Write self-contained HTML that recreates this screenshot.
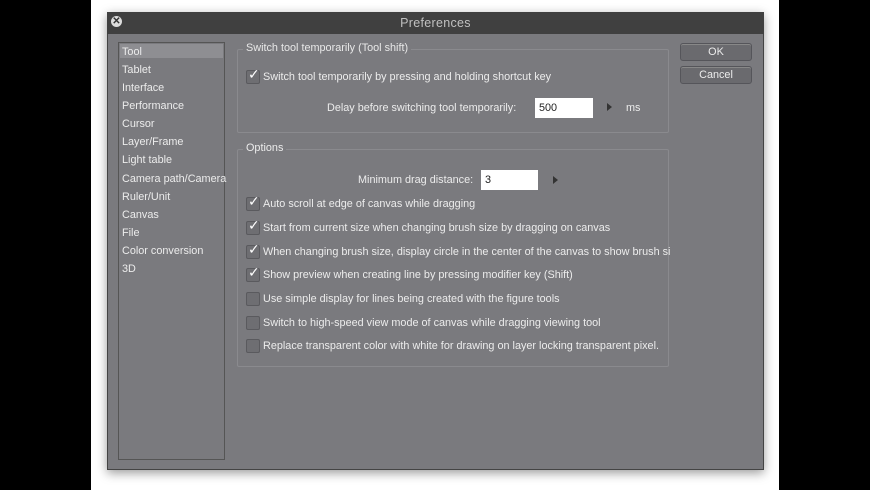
<!DOCTYPE html>
<html><head><style>
body{margin:0;width:870px;height:490px;background:#fff;position:relative;overflow:hidden;font-family:"Liberation Sans",sans-serif;font-size:10.85px;color:#ececec}
.a{position:absolute}
.cb{position:absolute;left:246px;width:12px;height:12px;background:#6e6e72;border:1px solid #5a5a5e;border-radius:2px}
.ck::after{content:"✓";position:absolute;left:1px;top:-4px;font-size:14px;color:#fff;font-family:"DejaVu Sans",sans-serif}
.lbl{position:absolute;left:263px;white-space:nowrap;margin-top:1px}
.li{position:absolute;left:122px;white-space:nowrap}
.grp{position:absolute;border:1px solid #8a8a8e;border-radius:2px}
.btn{position:absolute;left:680px;width:70px;height:16px;background:#6a6a6e;border:1px solid #55555a;border-radius:3px;text-align:center;line-height:16px;box-shadow:inset 0 1px 0 #888}
</style></head><body>
<div class="a" style="left:0;top:0;width:91px;height:490px;background:#000"></div>
<div class="a" style="left:779px;top:0;width:91px;height:490px;background:#000"></div>
<div class="a" style="left:107px;top:12px;width:655px;height:456px;background:#7a7a7e;box-shadow:0 3px 10px rgba(0,0,0,.4);border:1px solid #444"></div>
<div class="a" style="left:107px;top:12px;width:657px;height:22px;background:#404040;text-align:center;line-height:23px;font-size:12.5px;color:#c0c0c0;letter-spacing:.3px">Preferences</div>
<div class="a" style="left:111px;top:16px;width:11px;height:11px;border-radius:50%;background:#ddd;color:#333;font-size:10px;line-height:11px;text-align:center;font-weight:bold">✕</div>
<div class="a" style="left:118px;top:42px;width:105px;height:416px;border:1px solid #555;background:#7a7a7e"></div>
<div class="a" style="left:120px;top:44px;width:103px;height:14px;background:#8e8e92"></div>
<div class="li" style="top:46px">Tool</div>
<div class="li" style="top:64px">Tablet</div>
<div class="li" style="top:82px">Interface</div>
<div class="li" style="top:100px">Performance</div>
<div class="li" style="top:118px">Cursor</div>
<div class="li" style="top:136px">Layer/Frame</div>
<div class="li" style="top:154px">Light table</div>
<div class="li" style="top:173px">Camera path/Camera</div>
<div class="li" style="top:191px">Ruler/Unit</div>
<div class="li" style="top:209px">Canvas</div>
<div class="li" style="top:227px">File</div>
<div class="li" style="top:245px">Color conversion</div>
<div class="li" style="top:263px">3D</div>
<div class="grp" style="left:237px;top:49px;width:430px;height:82px"></div>
<div class="a" style="left:243px;top:42px;background:#7a7a7e;padding:0 3px;color:#e8e8e8">Switch tool temporarily (Tool shift)</div>
<div class="cb ck" style="top:70px"></div><div class="lbl" style="top:70px">Switch tool temporarily by pressing and holding shortcut key</div>
<div class="a" style="left:327px;top:102px">Delay before switching tool temporarily:</div>
<div class="a" style="left:535px;top:98px;width:54px;height:20px;background:#fff;color:#222;padding-left:4px;line-height:20px">500</div>
<div class="a" style="left:607px;top:103px;width:0;height:0;border-left:5px solid #333;border-top:4px solid transparent;border-bottom:4px solid transparent"></div>
<div class="a" style="left:626px;top:102px">ms</div>
<div class="grp" style="left:237px;top:149px;width:430px;height:216px"></div>
<div class="a" style="left:243px;top:142px;background:#7a7a7e;padding:0 3px">Options</div>
<div class="a" style="left:358px;top:174px">Minimum drag distance:</div>
<div class="a" style="left:481px;top:170px;width:53px;height:20px;background:#fff;color:#222;padding-left:4px;line-height:20px">3</div>
<div class="a" style="left:553px;top:176px;width:0;height:0;border-left:5px solid #333;border-top:4px solid transparent;border-bottom:4px solid transparent"></div>
<div class="cb ck" style="top:197px"></div><div class="lbl" style="top:197px">Auto scroll at edge of canvas while dragging</div>
<div class="cb ck" style="top:221px"></div><div class="lbl" style="top:221px">Start from current size when changing brush size by dragging on canvas</div>
<div class="cb ck" style="top:245px"></div><div class="lbl" style="top:245px;width:407px;overflow:hidden">When changing brush size, display circle in the center of the canvas to show brush size</div>
<div class="cb ck" style="top:268px"></div><div class="lbl" style="top:268px">Show preview when creating line by pressing modifier key (Shift)</div>
<div class="cb" style="top:292px"></div><div class="lbl" style="top:292px">Use simple display for lines being created with the figure tools</div>
<div class="cb" style="top:316px"></div><div class="lbl" style="top:316px">Switch to high-speed view mode of canvas while dragging viewing tool</div>
<div class="cb" style="top:339px"></div><div class="lbl" style="top:339px">Replace transparent color with white for drawing on layer locking transparent pixel.</div>
<div class="btn" style="top:43px">OK</div>
<div class="btn" style="top:66px">Cancel</div>
</body></html>
